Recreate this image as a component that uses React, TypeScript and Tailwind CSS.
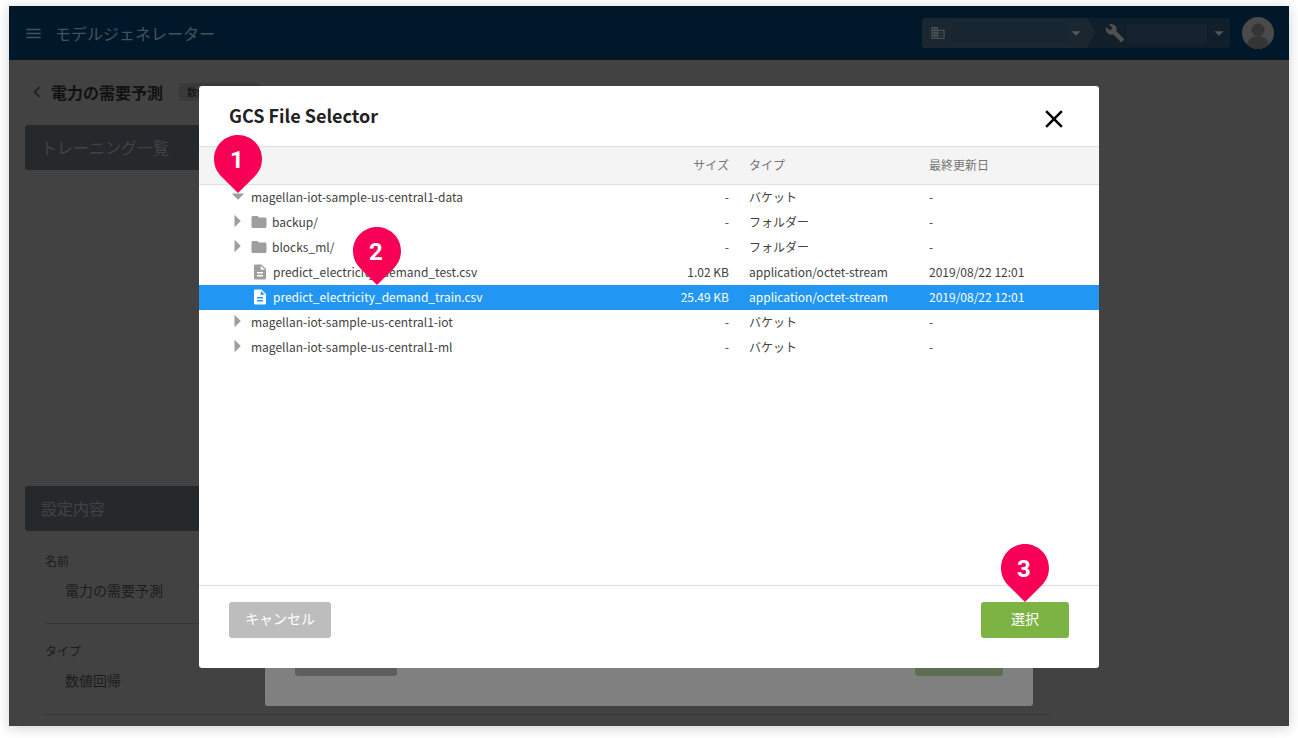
import React from "react";
import { MdMenu, MdChevronLeft, MdDomain, MdBuild, MdArrowDropDown, MdArrowRight, MdClose, MdFolder, MdDescription } from "react-icons/md";

function Pin({ n, className }: { n: number; className: string }) {
  return (
    <div className={`absolute w-[48px] h-[58px] ${className}`}>
      <svg width="48" height="58" viewBox="0 0 48 58" className="absolute left-0 top-0">
        <path d="M24 0C10.7 0 0 10.7 0 24c0 7 2.8 13 7.4 17.4L24 58l16.6-16.6C45.2 37 48 31 48 24 48 10.7 37.3 0 24 0z" fill="#f90057" />
      </svg>
      <span className="absolute left-[-1px] top-[1px] w-[48px] h-[48px] flex items-center justify-center text-white text-[24px] font-bold font-['Roboto',sans-serif]">{n}</span>
    </div>
  );
}

type Row = { indent: boolean; arrow?: "open" | "closed"; icon?: "folder" | "file"; name: string; size: string; type: string; date: string; sel?: boolean };

const rows: Row[] = [
  { indent: false, arrow: "open", name: "magellan-iot-sample-us-central1-data", size: "-", type: "バケット", date: "-" },
  { indent: true, arrow: "closed", icon: "folder", name: "backup/", size: "-", type: "フォルダー", date: "-" },
  { indent: true, arrow: "closed", icon: "folder", name: "blocks_ml/", size: "-", type: "フォルダー", date: "-" },
  { indent: true, icon: "file", name: "predict_electricity_demand_test.csv", size: "1.02 KB", type: "application/octet-stream", date: "2019/08/22 12:01" },
  { indent: true, icon: "file", name: "predict_electricity_demand_train.csv", size: "25.49 KB", type: "application/octet-stream", date: "2019/08/22 12:01", sel: true },
  { indent: false, arrow: "closed", name: "magellan-iot-sample-us-central1-iot", size: "-", type: "バケット", date: "-" },
  { indent: false, arrow: "closed", name: "magellan-iot-sample-us-central1-ml", size: "-", type: "バケット", date: "-" },
];

function TreeRow({ r }: { r: Row }) {
  const iconColor = r.sel ? "text-white" : "text-[#9e9e9e]";
  return (
    <div className={`flex items-center h-[25px] text-[12px] ${r.sel ? "bg-[#2196f3] text-white" : "text-[#424242]"}`}>
      <div className="w-[30px] shrink-0" />
      <div className="w-[22px] h-[25px] shrink-0 flex items-center justify-center">
        {r.arrow === "open" && <MdArrowDropDown size={30} className={`${iconColor} shrink-0 -translate-y-[2px] -translate-x-[2px]`} />}
        {r.arrow === "closed" && <MdArrowRight size={30} className={`${iconColor} shrink-0 -translate-y-[2px] -translate-x-[3px]`} />}
      </div>
      <div className="flex-1 flex items-center min-w-0">
        {r.indent && (
          <div className="w-[21px] shrink-0 flex items-center">
            {r.icon === "folder" && <MdFolder size={18} className={`${iconColor} shrink-0 -translate-y-[1px] -translate-x-[1px]`} />}
            {r.icon === "file" && <MdDescription size={18} className={`${iconColor} shrink-0 -translate-y-[1px]`} />}
          </div>
        )}
        <div className={`whitespace-nowrap -translate-y-[1px] ${r.icon === "file" ? "pl-[1px]" : ""}`}>{r.name}</div>
      </div>
      <div className="w-[70px] shrink-0 text-right whitespace-nowrap -translate-y-[1px]">{r.size}</div>
      <div className="w-[180px] shrink-0 ml-[20px] whitespace-nowrap -translate-y-[1px]">{r.type}</div>
      <div className="w-[170px] shrink-0 whitespace-nowrap -translate-y-[1px]">{r.date}</div>
    </div>
  );
}

export default function App() {
  return (
    <div className="w-[1298px] h-[738px] bg-white pt-[6px] pl-[9px] overflow-hidden font-['Noto_Sans_CJK_JP','Noto_Sans',sans-serif]">
      <div className="relative w-[1280px] h-[720px] bg-[#424242] shadow-[0_2px_12px_rgba(0,0,0,0.18)]">
        <header className="h-[54px] bg-[#001829] flex items-center pl-[15px] pr-[15px]">
          <MdMenu size={19} className="text-[#47535c]" />
          <div className="ml-[12px] text-[16px] text-[#47535c] leading-none">モデルジェネレーター</div>
          <div className="ml-auto flex items-center h-[30px] w-[308px] rounded-[3px] overflow-hidden">
            <div className="flex items-center h-[30px] w-[166px] bg-[#1a2731] shrink-0">
              <MdDomain size={16} className="ml-[8px] text-[#4a4f52] shrink-0" />
              <div className="ml-[5px] w-[116px] h-[20px] bg-[#16252f] shrink-0" />
              <MdArrowDropDown size={22} className="ml-[-2px] text-[#565656] shrink-0" />
            </div>
            <svg width="10" height="30" viewBox="0 0 10 30" className="shrink-0">
              <rect width="10" height="30" fill="#111f2b" />
              <path d="M0 0 L8.5 15 L0 30z" fill="#1a2731" />
              <path d="M0 0 L8.5 15 L0 30" fill="none" stroke="#0b1a26" strokeWidth="1" />
            </svg>
            <div className="flex items-center h-[30px] flex-1 bg-[#111f2b]">
              <MdBuild size={20} className="ml-[7px] text-[#4f5050] shrink-0" />
              <div className="ml-[2px] w-[80px] h-[19px] bg-[#14232f] shrink-0" />
              <MdArrowDropDown size={22} className="ml-[1px] text-[#565656] shrink-0" />
            </div>
          </div>
          <div className="ml-[12px] w-[32px] h-[32px] rounded-full bg-[#4a4a4a] overflow-hidden">
            <svg width="32" height="32" viewBox="0 0 32 32">
              <circle cx="16" cy="13" r="6.5" fill="#353535" />
              <ellipse cx="16" cy="28" rx="11" ry="9" fill="#353535" />
            </svg>
          </div>
        </header>

        <main className="px-[16px]">
          <div className="flex items-center h-[24px] mt-[20px]">
            <MdChevronLeft size={22} className="text-[#222] ml-[1px]" />
            <h1 className="ml-[3px] text-[16px] font-bold text-[#111] leading-none">電力の需要予測</h1>
            <span className="ml-[16px] w-[80px] h-[18px] rounded-[2px] bg-[#3a3a3a] text-[10px] text-[#111] pl-[8px] leading-[18px]">数値回帰</span>
          </div>
          <div className="mt-[21px] h-[45px] w-[1000px] rounded-[3px] bg-[#25292c] flex items-center pl-[16px] pb-[2px] text-[16px] text-[#3f4346]">トレーニング一覧</div>
          <div className="mt-[316px] h-[45px] w-[1000px] rounded-[3px] bg-[#25292c] flex items-center pl-[16px] pb-[2px] text-[16px] text-[#3f4346]">設定内容</div>
          <div className="pl-[20px] w-[1024px]">
            <div className="h-[93px] border-b border-[#363636] pt-[22px]">
              <div className="text-[12px] leading-[16px] text-[#1c1c1c]">名前</div>
              <div className="mt-[11px] ml-[20px] text-[14px] leading-[20px] text-[#1c1c1c]">電力の需要予測</div>
            </div>
            <div className="h-[91px] border-b border-[#363636] pt-[19px]">
              <div className="text-[12px] leading-[16px] text-[#1c1c1c]">タイプ</div>
              <div className="mt-[11px] ml-[20px] text-[14px] leading-[20px] text-[#1c1c1c]">数値回帰</div>
            </div>
          </div>
        </main>

        {/* Dialog underneath */}
        <div className="absolute left-[256px] top-[100px] w-[768px] h-[600px] bg-[#808080] rounded-[3px]">
          <div className="absolute left-[30px] bottom-[30px] w-[102px] h-[36px] rounded-[3px] bg-[#5e5e5e]" />
          <div className="absolute right-[30px] bottom-[30px] w-[88px] h-[36px] rounded-[3px] bg-[#5f6e50]" />
        </div>

        {/* Top dialog */}
        <div className="absolute left-[190px] top-[80px] w-[900px] h-[582px] bg-white rounded-[3px] flex flex-col">
          <div className="h-[60px] flex items-center justify-between pl-[30px] pr-[30px] shrink-0">
            <h2 className="text-[18px] font-bold text-[#212121] leading-none -translate-y-[1px]">GCS File Selector</h2>
            <MdClose size={30} className="text-black translate-y-[3px]" />
          </div>
          <div className="h-[39px] shrink-0 bg-[#f4f4f4] border-y border-[#dfdfdf] flex items-center pb-[2px] text-[12px] text-[#757575]">
            <div className="w-[530px] text-right">サイズ</div>
            <div className="ml-[20px] w-[180px]">タイプ</div>
            <div>最終更新日</div>
          </div>
          <div className="flex-1">
            {rows.map((r) => <TreeRow key={r.name} r={r} />)}
          </div>
          <div className="h-[83px] shrink-0 border-t border-[#dfdfdf] flex items-start justify-between px-[30px] pt-[16px]">
            <button className="w-[102px] h-[36px] rounded-[3px] bg-[#bdbdbd] text-white text-[14px] pb-[3px]">キャンセル</button>
            <button className="w-[88px] h-[36px] rounded-[3px] bg-[#7cb342] text-white text-[14px] pb-[3px]">選択</button>
          </div>
        </div>

        <Pin n={1} className="left-[205px] top-[129px]" />
        <Pin n={2} className="left-[344px] top-[221px]" />
        <Pin n={3} className="left-[992px] top-[538px]" />
      </div>
    </div>
  );
}
